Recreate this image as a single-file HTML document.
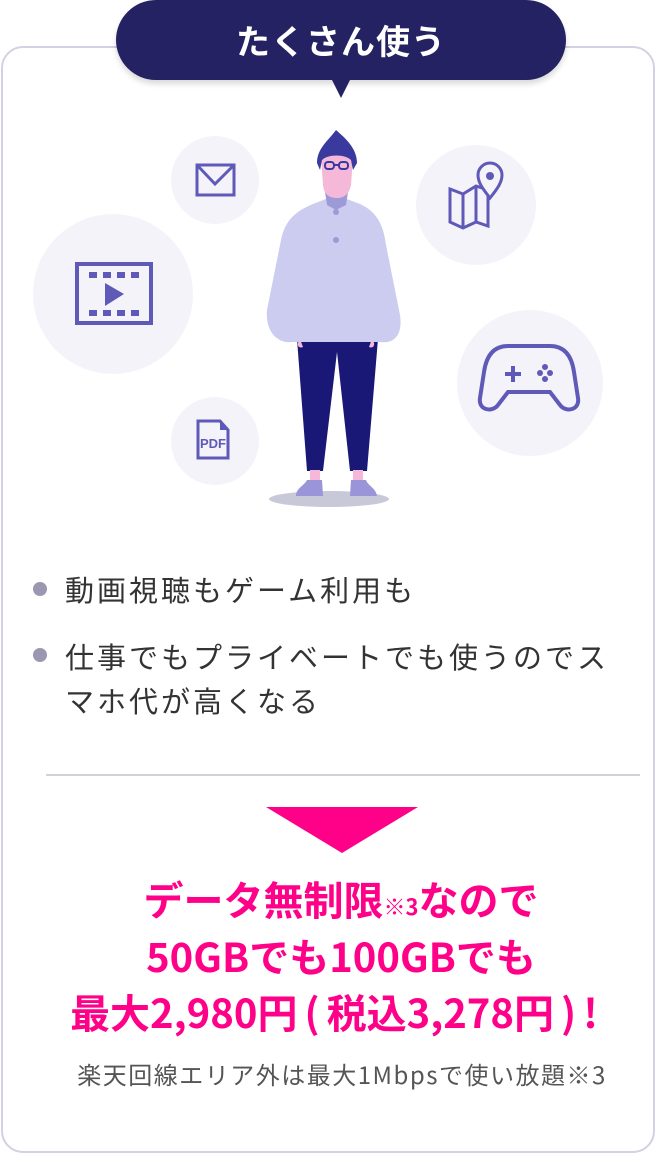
<!DOCTYPE html>
<html><head><meta charset="utf-8">
<style>
html,body{margin:0;padding:0;background:#fff;}
body{width:656px;height:1154px;position:relative;overflow:hidden;font-family:"Noto Sans CJK JP","Liberation Sans",sans-serif;}
.card{position:absolute;left:1px;top:46px;width:650px;height:1103px;border:2px solid #d3d1e3;border-radius:22px;}
.pill{position:absolute;left:116px;top:0;width:450px;height:80px;background:#242262;border-radius:40px;color:#fff;font-weight:bold;font-size:34px;text-align:center;line-height:80px;box-shadow:0 4px 6px rgba(0,0,0,.15);letter-spacing:1px;}
.tail{position:absolute;left:331px;top:78px;width:0;height:0;border-left:10px solid transparent;border-right:10px solid transparent;border-top:20px solid #242262;}
.b{position:absolute;left:65px;font-size:29px;letter-spacing:3px;color:#333;line-height:44px;white-space:nowrap;}
.dot{position:absolute;left:33px;width:14px;height:14px;border-radius:50%;background:#9b97b0;}
.hr{position:absolute;left:46px;top:774px;width:594px;height:2px;background:#d3d1d8;}
.tri{position:absolute;left:266px;top:807px;width:0;height:0;border-left:76px solid transparent;border-right:76px solid transparent;border-top:46px solid #ff0088;}
.pk{position:absolute;left:13px;width:656px;text-align:center;color:#ff0088;font-weight:bold;font-size:40px;line-height:56px;white-space:nowrap;}
.pp{margin:0 7px;}
.note{position:absolute;left:0;width:684px;text-align:center;top:1057px;font-size:24px;letter-spacing:1.5px;color:#555;white-space:nowrap;line-height:34px;}
</style></head><body>
<div class="card"></div>
<svg width="656" height="520" style="position:absolute;left:0;top:0">
<g fill="#f4f3f9">
<circle cx="215" cy="180" r="44"/><circle cx="113" cy="294" r="80"/><circle cx="476" cy="205" r="60"/><circle cx="530" cy="383" r="73"/><circle cx="215" cy="441" r="44"/>
</g>
<g fill="none" stroke="#5f5ab8" stroke-width="3">
<rect x="197" y="165" width="37" height="30"/><path d="M197 165 L215 184 L234 165"/>
<rect x="77" y="264" width="74" height="59" stroke-width="4"/>
<path d="M450 189 L463 194 L476 186 L488 190 L488 226 L476 222 L463 228 L450 222Z"/><path d="M463 194 V228 M476 186 V222"/>
<path d="M490 198 C482 188 478 182 478 175 A12 12 0 0 1 502 175 C502 182 498 188 490 198Z" fill="#f4f3f9"/>
<path d="M508 346 H550 C566 346 572 358 574 372 L578 398 C580 410 566 413 560 405 L550 392 H508 L498 405 C492 413 478 410 480 398 L484 372 C486 358 492 346 508 346Z" stroke-width="4"/>
<path d="M198 421 H220 L228 430 V458 H198Z"/>
</g>
<g fill="#5f5ab8">
<rect x="89" y="272" width="8" height="6"/><rect x="103" y="272" width="8" height="6"/><rect x="117" y="272" width="8" height="6"/><rect x="131" y="272" width="8" height="6"/>
<rect x="89" y="310" width="8" height="6"/><rect x="103" y="310" width="8" height="6"/><rect x="117" y="310" width="8" height="6"/><rect x="131" y="310" width="8" height="6"/>
<path d="M105 283 L124 294 L105 306Z"/>
<circle cx="490" cy="176" r="4"/>
<rect x="511" y="366" width="4" height="16"/><rect x="505" y="372" width="16" height="4"/>
<circle cx="545" cy="367" r="3"/><circle cx="540" cy="373" r="3"/><circle cx="550" cy="373" r="3"/><circle cx="545" cy="379" r="3"/>
<path d="M220 421 L228 430 H220Z"/>
<text x="200" y="448" font-size="13" font-weight="bold" font-family="Liberation Sans">PDF</text>
</g>
<ellipse cx="329" cy="499" rx="60" ry="8" fill="#c9c8d8"/>
<path d="M297 339 H378 L367 471 H350 L337 352 L323 471 H307Z" fill="#191877"/>
<rect x="310" y="470" width="10" height="12" fill="#f5b8d8"/><rect x="353" y="470" width="10" height="12" fill="#f5b8d8"/>
<path d="M307 480 H322 L323 496 H296 C296 488 304 486 307 480Z" fill="#9a95d8"/>
<path d="M351 480 H366 C368 486 376 488 377 496 H350Z" fill="#9a95d8"/>
<path d="M300 339 C296 344 298 349 303 347 Z M372 339 C376 344 374 349 369 347Z" fill="#f5b8d8"/>
<path d="M336 195 L360 204 C375 211 383 222 386 245 L400 315 C403 335 394 344 380 342 H292 C278 344 265 332 267 310 L281 240 C285 220 296 211 313 204Z" fill="#cccbf0"/>
<path d="M325 192 H348 L346 205 L336 210 L327 205Z" fill="#9e9ad8"/>
<path d="M321 158 C321 148 352 148 353 158 L351 185 C349 195 343 198 337 198 C330 198 324 195 323 185Z" fill="#f5b8d8"/>
<path d="M336 130 C345 138 357 148 357 163 L353 170 L351 160 C345 154 328 154 322 160 L320 170 L317 163 C317 148 329 140 336 130Z" fill="#3a3a9e"/>
<g fill="none" stroke="#3a3a9e" stroke-width="2"><rect x="325" y="162" width="9" height="7" rx="3"/><rect x="339" y="162" width="9" height="7" rx="3"/><path d="M334 165 H339"/></g>
<circle cx="336" cy="212" r="3" fill="#9e9ad8"/><circle cx="336" cy="240" r="3" fill="#9e9ad8"/>
</svg>
<div class="pill">たくさん使う</div>
<div class="tail"></div>
<div class="dot" style="top:582px"></div>
<div class="b" style="top:567px">動画視聴もゲーム利用も</div>
<div class="dot" style="top:648px"></div>
<div class="b" style="top:634px">仕事でもプライベートでも使うのでス<br>マホ代が高くなる</div>
<div class="hr"></div>
<div class="tri"></div>
<div class="pk" style="top:870px">データ無制限<span style="font-size:22px">※3</span>なので</div>
<div class="pk" style="top:927px">50GBでも100GBでも</div>
<div class="pk" style="top:983px;left:6px">最大2,980円<span class="pp">(</span>税込3,278円<span class="pp">)</span>!</div>
<div class="note">楽天回線エリア外は最大1Mbpsで使い放題※3</div>
</body></html>
